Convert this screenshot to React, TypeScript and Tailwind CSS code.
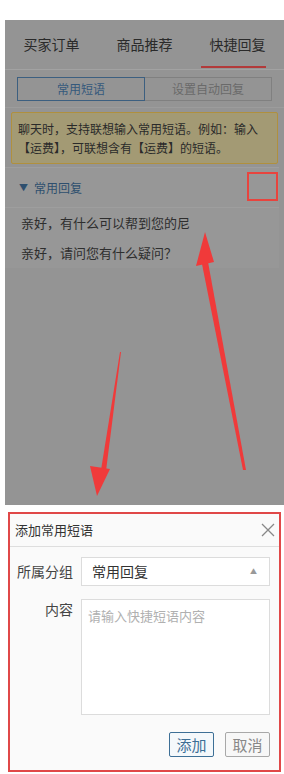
import React from 'react'

const font = { fontFamily: '"Noto Sans CJK SC", "Noto Sans", sans-serif' }

function Arrows() {
    return (
        <svg className="absolute left-0 top-0 pointer-events-none" width="284" height="774">
            {/* up arrow */}
            <polygon points="246,470 208,262 202,264 243,470" fill="#f03a3a" />
            <polygon points="205,232 196,266 214,262" fill="#f03a3a" />
            {/* down arrow */}
            <polygon points="120,352 101,470 106,471 121,352" fill="#f03a3a" />
            <polygon points="97,496 90,466 110,469" fill="#f03a3a" />
        </svg>
    )
}

export default function App() {
    return (
        <div className="relative w-[284px] h-[774px] bg-white overflow-hidden" style={font}>
            <div className="h-[20px] bg-white" />

            {/* dimmed panel */}
            <div className="ml-[5px] h-[485px] bg-[#949494] flex flex-col">
                {/* main tabs */}
                <div className="h-[50px] grid grid-cols-3 border-b border-[#a2a2a2]">
                    <div className="flex items-center justify-center text-[14px] text-[#2a2a2a]">买家订单</div>
                    <div className="flex items-center justify-center text-[14px] text-[#2a2a2a]">商品推荐</div>
                    <div className="relative flex items-center justify-center text-[14px] text-[#2a2a2a]">
                        快捷回复
                        <span className="absolute bottom-[1px] left-[10px] w-[65px] h-[2px] bg-[#b23a3a]" />
                    </div>
                </div>

                {/* sub tabs */}
                <div className="px-[12px] pt-[7px] pb-[6px] border-b border-[#9c9c9c]">
                    <div className="flex h-[24px]">
                        <div className="flex-1 flex items-center justify-center border border-[#3c5f80] text-[12px] text-[#34597c]">常用短语</div>
                        <div className="flex-1 flex items-center justify-center border border-l-0 border-[#808080] text-[12px] text-[#6a6a6a]">设置自动回复</div>
                    </div>
                </div>

                {/* notice */}
                <div className="mx-[6px] mt-[4px] px-[6px] py-[6px] bg-[#a39a74] border border-[#b0903e] rounded-[2px] text-[12px] leading-[19px] text-[#2a2a2a]">
                    聊天时，支持联想输入常用短语。例如：输入【运费】，可联想含有【运费】的短语。
                </div>

                {/* list */}
                <div className="mt-[3px] mr-[5px] bg-[#979797] border-t border-[#9e9e9e]">
                    <div className="h-[40px] flex items-center pl-[14px] text-[12px] text-[#2e4f6e] border-b border-[#9e9e9e]">
                        <span className="text-[9px] mr-[6px]">▼</span>
                        常用回复
                    </div>
                    <div className="h-[30px] flex items-center pl-[16px] text-[13px] text-[#2e2e2e]">亲好，有什么可以帮到您的尼</div>
                    <div className="h-[30px] flex items-center pl-[16px] text-[13px] text-[#2e2e2e]">亲好，请问您有什么疑问？</div>
                </div>
            </div>

            {/* dialog */}
            <div className="mt-[7px] ml-[8px] mr-[3px] h-[260px] border-2 border-[#e04848] bg-[#fafafa] flex flex-col">
                <div className="h-[33px] flex items-center justify-between pl-[5px] pr-[4px] border-b border-[#dedede]">
                    <span className="text-[13px] text-[#333]">添加常用短语</span>
                    <svg width="14" height="14" viewBox="0 0 14 14">
                        <path d="M1 1 L13 13 M13 1 L1 13" stroke="#888" strokeWidth="1.3" fill="none" />
                    </svg>
                </div>
                <div className="flex-1 pt-[10px] pr-[9px]">
                    <div className="flex items-center">
                        <div className="w-[63px] text-right text-[14px] text-[#444]">所属分组</div>
                        <div className="ml-[8px] flex-1 h-[29px] bg-white border border-[#dcdcdc] flex items-center justify-between pl-[10px] pr-[12px]">
                            <span className="text-[14px] text-[#333]">常用回复</span>
                            <span className="text-[7px] text-[#999]">▲</span>
                        </div>
                    </div>
                    <div className="flex mt-[13px]">
                        <div className="w-[63px] text-right text-[14px] text-[#444]">内容</div>
                        <div className="ml-[8px] flex-1 h-[116px] bg-white border border-[#dcdcdc] px-[6px] py-[6px] text-[13px] text-[#b0b0b0]">
                            请输入快捷短语内容
                        </div>
                    </div>
                    <div className="flex justify-end gap-[11px] mt-[17px]">
                        <button className="w-[45px] h-[25px] border border-[#3d6f96] rounded-[2px] bg-[#f4f8fb] text-[15px] text-[#3d6f96] leading-none">添加</button>
                        <button className="w-[45px] h-[25px] border border-[#a8a8a8] rounded-[2px] bg-[#f7f7f7] text-[15px] text-[#888] leading-none">取消</button>
                    </div>
                </div>
            </div>

            {/* annotation box */}
            <div className="absolute left-[247px] top-[172px] w-[31px] h-[29px] border-2 border-[#e8443e]" />
            <Arrows />
        </div>
    )
}
